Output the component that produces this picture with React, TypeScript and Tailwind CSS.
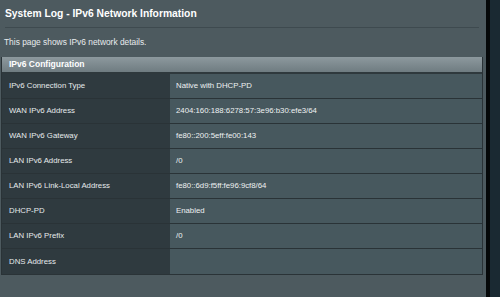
const rows: [string, string][] = [
  ["IPv6 Connection Type", "Native with DHCP-PD"],
  ["WAN IPv6 Address", "2404:160:188:6278:57:3e96:b30:efe3/64"],
  ["WAN IPv6 Gateway", "fe80::200:5eff:fe00:143"],
  ["LAN IPv6 Address", "/0"],
  ["LAN IPv6 Link-Local Address", "fe80::6d9:f5ff:fe96:9cf8/64"],
  ["DHCP-PD", "Enabled"],
  ["LAN IPv6 Prefix", "/0"],
  ["DNS Address", ""],
];

const App = () => {
  return (
    <div
      className="flex w-[500px] h-[297px] overflow-hidden"
      style={{ fontFamily: '"Liberation Sans", Arial, sans-serif' }}
    >
      <div className="flex flex-col flex-1 bg-[#4d5a5f] pl-[1px] pr-[3px]">
        <div className="flex items-center mx-[4px] h-[28px] border-b border-[#3e4a4f]">
          <h1 className="text-[10.3px] leading-[14px] font-bold text-white">
            System Log - IPv6 Network Information
          </h1>
        </div>
        <div className="flex items-center pl-[3px] h-[29px] text-[8.4px] text-[#e8ecee]">
          This page shows IPv6 network details.
        </div>
        <div className="flex flex-col border border-t-0 border-[#2a3337]">
          <div className="flex items-center h-[17px] pl-[7px] bg-gradient-to-b from-[#8d999e] to-[#6f7c81] border-b-2 border-[#2f393d] text-[8.5px] font-bold text-white">
            IPv6 Configuration
          </div>
          {rows.map(([label, value], i) => (
            <div
              key={label}
              className={
                "flex h-[25px] text-[7.8px] " +
                (i < rows.length - 1 ? "border-b border-[#2a3337]" : "")
              }
            >
              <div className="flex items-center w-[168px] pl-[7px] bg-[#2f3a3f] text-[#e6eaec]">
                {label}
              </div>
              <div className="flex items-center flex-1 pl-[6px] bg-[#47585e] text-[#eef1f2]">
                {value}
              </div>
            </div>
          ))}
        </div>
      </div>
      <div className="w-[4px] bg-[#050809]" />
      <div className="w-[10px] bg-[#1a2932]" />
    </div>
  );
};

export default App;
